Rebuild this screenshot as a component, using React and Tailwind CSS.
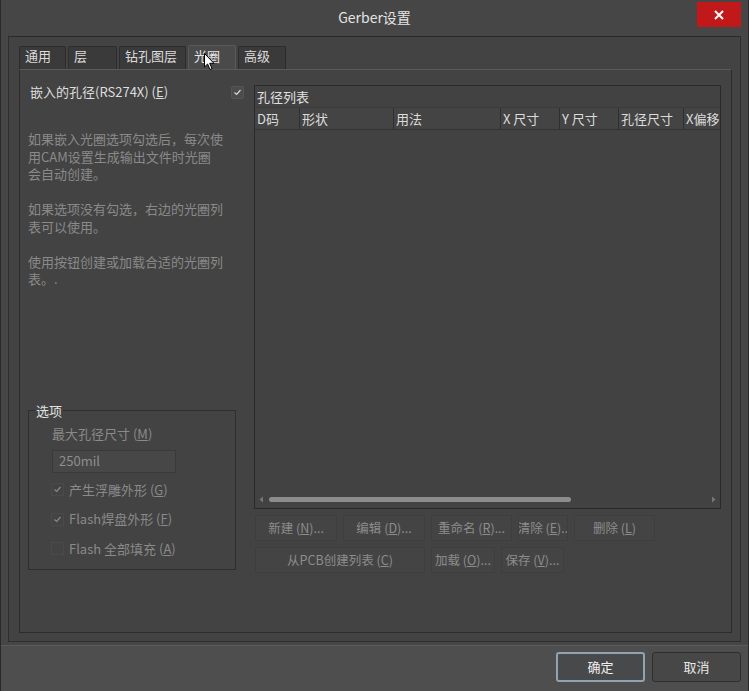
import React from "react";

const font = { fontFamily: '"Noto Sans CJK SC", "Noto Sans", sans-serif' };

function Tab({ label, w, active }) {
  return (
    <div
      className={`flex items-start pl-[5px] border border-b-0 rounded-t-[2px] text-[13px] leading-[17px] ${
        active
          ? "bg-[#4a4a4a] border-[#5a5a5a] text-[#e6e6e6] h-[24px] pt-[1px]"
          : "bg-[#3a3a3a] border-[#2c2c2c] text-[#dcdcdc] h-[23px] pt-0"
      }`}
      style={{ width: w }}
    >
      {label}
    </div>
  );
}

function SmallBtn({ label, w }) {
  return (
    <div
      className="h-[26px] flex items-center justify-center bg-[#444444] border border-[#3e3e3e] text-[12.5px] text-[#8c8c8c] whitespace-nowrap overflow-hidden"
      style={{ width: w }}
    >
      {label}
    </div>
  );
}

function Check({ checked, label }) {
  return (
    <div className="flex items-center gap-[5px] h-[18px]">
      <div className="w-[13px] h-[13px] border border-[#4a4a4a] bg-[#434343] flex items-center justify-center">
        {checked && (
          <svg width="9" height="9" viewBox="0 0 9 9">
            <path d="M1.5 4.5 L3.7 6.5 L7.5 2" stroke="#8a8a8a" strokeWidth="1.2" fill="none" />
          </svg>
        )}
      </div>
      <span className="text-[13px] text-[#8a8a8a]">{label}</span>
    </div>
  );
}

const cols = [
  ["D码", 45],
  ["形状", 94],
  ["用法", 107],
  ["X 尺寸", 59],
  ["Y 尺寸", 59],
  ["孔径尺寸", 65],
  ["X偏移", 40],
];

export default function App() {
  return (
    <div
      className="w-[749px] h-[691px] bg-[#464646] flex flex-col border-x border-[#2a2a2a] relative overflow-hidden"
      style={font}
    >
      {/* title bar */}
      <div className="h-[36px] grid grid-cols-[1fr_auto_1fr] items-start shrink-0">
        <div />
        <div className="pt-[7px] text-[14px] text-[#e4e4e4]">Gerber设置</div>
        <div className="flex justify-end pt-[2px] pr-[7px]">
          <div className="w-[44px] h-[25px] bg-[#c1191a] flex items-center justify-center">
            <svg width="10" height="10" viewBox="0 0 10 10">
              <path d="M1 1 L9 9 M9 1 L1 9" stroke="#ffffff" strokeWidth="2" />
            </svg>
          </div>
        </div>
      </div>

      {/* content group */}
      <div className="mx-[7px] h-[606px] border border-[#2e2e2e] border-t-[#2a2a2a] bg-[#434343] pt-[8px] px-[10px] flex flex-col shrink-0">
        <div className="flex items-end gap-[2px] h-[24px]">
          <Tab label="通用" w={47} />
          <Tab label="层" w={49} />
          <Tab label="钻孔图层" w={67} />
          <Tab label="光圈" w={48} active />
          <Tab label="高级" w={48} />
        </div>
        <div className="w-[713px] h-[564px] border border-[#2c2c2c] border-t-[#5a5a5a] bg-[#434343] flex">
          {/* left column */}
          <div className="w-[235px] flex flex-col pl-[8px] pt-[13px]">
            <div className="flex items-center justify-between pl-[2px] pr-[11px] h-[18px]">
              <span className="text-[13px] text-[#dedede]">
                嵌入的孔径(RS274X) (<span className="underline">E</span>)
              </span>
              <div className="w-[13px] h-[13px] border border-[#555] bg-[#4c4c4c] rounded-[2px] flex items-center justify-center">
                <svg width="9" height="9" viewBox="0 0 9 9">
                  <path d="M1.5 4.5 L3.7 6.5 L7.5 2" stroke="#d8d8d8" strokeWidth="1.2" fill="none" />
                </svg>
              </div>
            </div>
            <div className="mt-[29px] w-[210px] text-[13px] leading-[17.5px] text-[#8a8a8a] flex flex-col gap-[17.5px] whitespace-nowrap">
              <p>
                如果嵌入光圈选项勾选后，每次使
                <br />
                用CAM设置生成输出文件时光圈
                <br />
                会自动创建。
              </p>
              <p>
                如果选项没有勾选，右边的光圈列
                <br />
                表可以使用。
              </p>
              <p>
                使用按钮创建或加载合适的光圈列
                <br />
                表。.
              </p>
            </div>
            {/* options group */}
            <div className="mt-[122px] w-[208px] h-[160px] border border-[#2e2e2e] relative pl-[23px] pt-[14px]">
              <div className="absolute -top-[10px] left-[6px] px-[1px] bg-[#434343] text-[13px] text-[#e2e2e2]">
                选项
              </div>
              <div className="text-[13px] text-[#8a8a8a] leading-[18px]">
                最大孔径尺寸 (<span className="underline">M</span>)
              </div>
              <div className="mt-[7px] w-[124px] h-[23px] border border-[#3a3a3a] bg-[#474747] flex items-center pl-[6px] text-[13px] text-[#8e8e8e]">
                250mil
              </div>
              <div className="mt-[8px] flex flex-col gap-[11.5px] -ml-[1px]">
                <Check checked label={<>产生浮雕外形 (<span className="underline">G</span>)</>} />
                <Check checked label={<>Flash焊盘外形 (<span className="underline">F</span>)</>} />
                <Check label={<>Flash 全部填充 (<span className="underline">A</span>)</>} />
              </div>
            </div>
          </div>

          {/* right column */}
          <div className="flex flex-col pt-[15px] -ml-[1px]">
            <div className="w-[467px] h-[424px] border border-[#2a2a2a] bg-[#424242] flex flex-col">
              <div className="h-[22px] flex items-center pl-[2px] text-[13px] text-[#e0e0e0] border-b border-[#3a3a3a]">
                孔径列表
              </div>
              <div className="h-[22px] flex border-b border-[#333] bg-[#444] overflow-hidden">
                {cols.map(([c, w], i) => (
                  <div
                    key={c}
                    className={`shrink-0 flex items-center pl-[2px] text-[13px] text-[#dcdcdc] ${
                      i < cols.length - 1 ? "border-r border-[#2f2f2f]" : ""
                    }`}
                    style={{ width: w }}
                  >
                    <span className="whitespace-nowrap">{c}</span>
                  </div>
                ))}
              </div>
              <div className="flex-1" />
              <div className="h-[15px] flex items-center px-[4px] gap-[5px] mb-[1px]">
                <svg width="5" height="7" viewBox="0 0 5 7">
                  <path d="M4 0.5 L0.5 3.5 L4 6.5 Z" fill="#777" />
                </svg>
                <div className="w-[302px] h-[5px] rounded-full bg-[#8c8c8c]" />
                <div className="flex-1" />
                <svg width="5" height="7" viewBox="0 0 5 7">
                  <path d="M1 0.5 L4.5 3.5 L1 6.5 Z" fill="#777" />
                </svg>
              </div>
            </div>
            <div className="mt-[6px] flex gap-[6px] pl-[1px]">
              <SmallBtn w={82} label={<>新建 (<span className="underline">N</span>)...</>} />
              <SmallBtn w={82} label={<>编辑 (<span className="underline">D</span>)...</>} />
              <SmallBtn w={81} label={<>重命名 (<span className="underline">R</span>)...</>} />
              <SmallBtn w={50} label={<>清除 (<span className="underline">E</span>)..</>} />
              <SmallBtn w={81} label={<>删除 (<span className="underline">L</span>)</>} />
            </div>
            <div className="mt-[6px] flex gap-[6px] pl-[1px]">
              <SmallBtn w={170} label={<>从PCB创建列表 (<span className="underline">C</span>)</>} />
              <SmallBtn w={64} label={<>加载 (<span className="underline">O</span>)...</>} />
              <SmallBtn w={63} label={<>保存 (<span className="underline">V</span>)...</>} />
            </div>
          </div>
        </div>
      </div>

      {/* bottom bar */}
      <div className="mt-[3px] flex-1 bg-[#4e4e4e] border-t border-[#5a5a5a] flex justify-end items-start pt-[6px] pr-[7px] gap-[7px]">
        <div className="w-[89px] h-[30px] rounded-[3px] border-2 border-[#8fa3b3] bg-[#48494b] flex items-center justify-center text-[13px] text-[#f0f0f0]">
          确定
        </div>
        <div className="w-[89px] h-[30px] rounded-[3px] border border-[#2e2e2e] bg-[#474747] flex items-center justify-center text-[13px] text-[#e8e8e8]">
          取消
        </div>
      </div>

      {/* mouse cursor */}
      <svg className="absolute left-[203px] top-[53px]" width="12" height="18" viewBox="0 0 12 18">
        <path d="M0.5 0.5 L0.5 14 L3.6 11 L6 16.5 L8 15.6 L5.7 10.3 L10 10.3 Z" fill="#ffffff" stroke="#000" strokeWidth="1" />
      </svg>
    </div>
  );
}
